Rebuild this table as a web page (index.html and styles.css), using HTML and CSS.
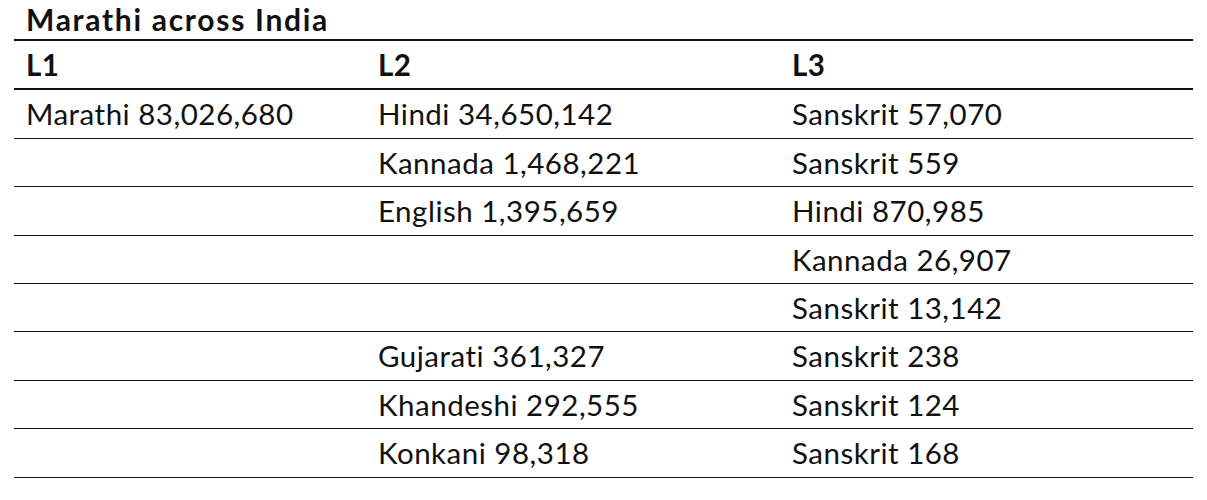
FILE: index.html
```html
<!DOCTYPE html>
<html>
<head>
<meta charset="utf-8">
<link rel="stylesheet" href="styles.css">
</head>
<body>
<table class="langs">
  <caption class="title">Marathi across India</caption>
  <thead>
    <tr><th class="c1">L1</th><th class="c2">L2</th><th class="c3">L3</th></tr>
  </thead>
  <tbody>
    <tr><td>Marathi 83,026,680</td><td>Hindi 34,650,142</td><td>Sanskrit 57,070</td></tr>
    <tr><td></td><td>Kannada 1,468,221</td><td>Sanskrit 559</td></tr>
    <tr><td></td><td>English 1,395,659</td><td>Hindi 870,985</td></tr>
    <tr><td></td><td></td><td>Kannada 26,907</td></tr>
    <tr><td></td><td></td><td>Sanskrit 13,142</td></tr>
    <tr><td></td><td>Gujarati 361,327</td><td>Sanskrit 238</td></tr>
    <tr><td></td><td>Khandeshi 292,555</td><td>Sanskrit 124</td></tr>
    <tr><td></td><td>Konkani 98,318</td><td>Sanskrit 168</td></tr>
  </tbody>
</table>
</body>
</html>
```
FILE: styles.css
```css
body {
  margin: 0;
  padding: 0 14px;
  background: #fff;
  color: #111;
  font-family: Lato, "Liberation Sans", sans-serif;
}
.langs {
  width: 1179px;
  border-collapse: collapse;
  table-layout: fixed;
}
.title {
  text-align: left;
  font-weight: 700;
  font-size: 30px;
  letter-spacing: 1.7px;
  line-height: 39px;
  padding-left: 12px;
}
.c1 { width: 328px; }
.c2 { width: 390px; }
th, td {
  text-align: left;
  font-size: 29.5px;
  letter-spacing: 0.5px;
  line-height: 33.4px;
  padding: 7px 12px;
  height: 33.4px;
  border-bottom: 1px solid #111;
}
th {
  font-weight: 700;
  border-top: 2px solid #111;
  border-bottom: 2px solid #111;
}
```
